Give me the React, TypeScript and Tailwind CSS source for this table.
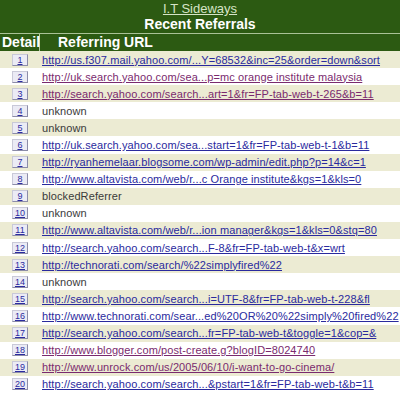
import React from "react";

const rows: { t: string; kind: "link" | "visited" | "plain" }[] = [
  { t: "http://us.f307.mail.yahoo.com/...Y=68532&inc=25&order=down&sort", kind: "link" },
  { t: "http://uk.search.yahoo.com/sea...p=mc orange institute malaysia", kind: "visited" },
  { t: "http://search.yahoo.com/search...art=1&fr=FP-tab-web-t-265&b=11", kind: "visited" },
  { t: "unknown", kind: "plain" },
  { t: "unknown", kind: "plain" },
  { t: "http://uk.search.yahoo.com/sea...start=1&fr=FP-tab-web-t-1&b=11", kind: "link" },
  { t: "http://ryanhemelaar.blogsome.com/wp-admin/edit.php?p=14&c=1", kind: "link" },
  { t: "http://www.altavista.com/web/r...c Orange institute&kgs=1&kls=0", kind: "link" },
  { t: "blockedReferrer", kind: "plain" },
  { t: "unknown", kind: "plain" },
  { t: "http://www.altavista.com/web/r...ion manager&kgs=1&kls=0&stq=80", kind: "link" },
  { t: "http://search.yahoo.com/search...F-8&fr=FP-tab-web-t&x=wrt", kind: "link" },
  { t: "http://technorati.com/search/%22simplyfired%22", kind: "link" },
  { t: "unknown", kind: "plain" },
  { t: "http://search.yahoo.com/search...i=UTF-8&fr=FP-tab-web-t-228&fl", kind: "link" },
  { t: "http://www.technorati.com/sear...ed%20OR%20%22simply%20fired%22", kind: "link" },
  { t: "http://search.yahoo.com/search...fr=FP-tab-web-t&toggle=1&cop=&", kind: "link" },
  { t: "http://www.blogger.com/post-create.g?blogID=8024740", kind: "visited" },
  { t: "http://www.unrock.com/us/2005/06/10/i-want-to-go-cinema/", kind: "visited" },
  { t: "http://search.yahoo.com/search...&pstart=1&fr=FP-tab-web-t&b=11", kind: "link" },
];

export default function App() {
  return (
    <div
      className="w-[400px] h-[393px] overflow-hidden bg-white"
      style={{ fontFamily: '"Liberation Sans", Arial, sans-serif' }}
    >
      <div className="bg-[#2c5a12] flex flex-col">
        <div className="h-[33px] flex flex-col items-center">
          <a className="text-[13px] leading-[15px] mt-[1px] text-[#d6e4c6] underline">I.T Sideways</a>
          <div className="text-[14px] leading-[16px] font-bold text-white">Recent Referrals</div>
        </div>
        <div className="h-[1px] bg-[#a9c296]" />
        <div className="h-[17px] flex">
          <div className="w-[40px] border-r border-[#b7c9a6] text-[14px] leading-[17px] font-bold text-white pl-[2px]">
            Detail
          </div>
          <div className="pl-[18px] text-[14px] leading-[17px] font-bold text-white">Referring URL</div>
        </div>
      </div>
      <div className="flex flex-col">
        {rows.map((r, i) => (
          <div
            key={i}
            className={`h-[17.1px] flex items-center ${i % 2 === 0 ? "bg-[#ecebd3]" : "bg-white"}`}
          >
            <div className="w-[40px] flex justify-center shrink-0">
              <span className="w-[16px] h-[12px] flex items-center justify-center bg-[#ebebf5] border border-t-[#c9c9d8] border-l-[#c9c9d8] border-b-[#8c8ca8] border-r-[#8c8ca8] text-[9px] leading-[10px] text-[#2b2ba0] underline">
                {i + 1}
              </span>
            </div>
            <span
              className={`pl-[2px] whitespace-nowrap text-[11px] leading-[14px] tracking-[0.1px] ${
                r.kind === "plain"
                  ? "text-[#3a3a3a]"
                  : r.kind === "visited"
                  ? "text-[#7a2a6e] underline"
                  : "text-[#2a2a9e] underline"
              }`}
            >
              {r.t}
            </span>
          </div>
        ))}
      </div>
    </div>
  );
}
